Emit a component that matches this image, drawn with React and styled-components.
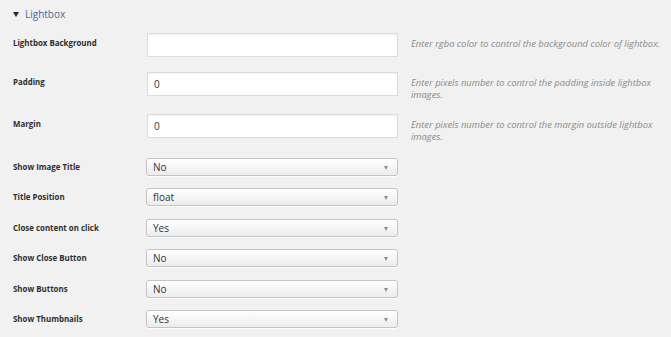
import React from "react";
import styled, { createGlobalStyle } from "styled-components";

const Global = createGlobalStyle`
  html, body { margin: 0; padding: 0; background: #f1f1f1; }
  body { font-family: "Open Sans", "Noto Sans", sans-serif; color: #333; }
`;

const Page = styled.div`
  width: 671px;
  height: 337px;
  background: #f1f1f1;
  padding: 7px 0 0 13px;
  box-sizing: border-box;
  overflow: hidden;
`;

const Header = styled.div`
  display: flex;
  align-items: center;
  gap: 6px;
  height: 14px;
  font-size: 10px;
  color: #4f63a2;
`;

const Caret = styled.span`
  width: 0;
  height: 0;
  border-left: 3px solid transparent;
  border-right: 3px solid transparent;
  border-top: 5px solid #2a2a2a;
`;

const Row = styled.div`
  display: grid;
  grid-template-columns: 121px 251px 1fr;
  column-gap: 13px;
  align-items: start;
  margin-top: ${(p) => p.$top}px;
`;

const Label = styled.div`
  font-size: 7.9px;
  font-weight: 700;
  color: #2f2f2f;
  line-height: 12px;
  padding-top: ${(p) => p.$pad}px;
  white-space: nowrap;
`;

const TextInput = styled.div`
  height: 24px;
  box-sizing: border-box;
  background: #fff;
  border: 1px solid #dcdcdc;
  box-shadow: inset 0 1px 2px rgba(0, 0, 0, 0.06);
  font-size: 10px;
  line-height: 22px;
  padding-left: 6px;
  color: #333;
`;

const Description = styled.div`
  font-size: 9.4px;
  font-style: italic;
  color: #8a8a8a;
  line-height: 11.5px;
  padding-top: 5px;
`;

const Select = styled.div`
  position: relative;
  height: 18px;
  margin-left: -1px;
  box-sizing: border-box;
  border: 1px solid #c4c4c4;
  border-radius: 3px;
  background: linear-gradient(#ffffff, #ececec);
  box-shadow: 0 1px 0 rgba(255, 255, 255, 0.8);
  font-size: 10px;
  line-height: 16px;
  padding-left: 6px;
  color: #333;
`;

const Arrow = styled.span`
  position: absolute;
  right: 9px;
  top: 7px;
  width: 0;
  height: 0;
  border-left: 2.5px solid transparent;
  border-right: 2.5px solid transparent;
  border-top: 4px solid #8e8e8e;
`;

const textRows = [
  { label: "Lightbox Background", value: "", desc: "Enter rgba color to control the background color of lightbox.", top: 12 },
  { label: "Padding", value: "0", desc: "Enter pixels number to control the padding inside lightbox images.", top: 15 },
  { label: "Margin", value: "0", desc: "Enter pixels number to control the margin outside lightbox images.", top: 14 },
];

const selectRows = [
  ["Show Image Title", "No"],
  ["Title Position", "float"],
  ["Close content on click", "Yes"],
  ["Show Close Button", "No"],
  ["Show Buttons", "No"],
  ["Show Thumbnails", "Yes"],
];

export default function App() {
  return (
    <Page>
      <Global />
      <Header>
        <Caret />
        <span>Lightbox</span>
      </Header>
      {textRows.map((r) => (
        <Row key={r.label} $top={r.top}>
          <Label $pad={4}>{r.label}</Label>
          <TextInput>{r.value}</TextInput>
          <Description>{r.desc}</Description>
        </Row>
      ))}
      {selectRows.map(([label, value], i) => (
        <Row key={label} $top={i === 0 ? 16 : 12.4}>
          <Label $pad={3}>{label}</Label>
          <Select>
            {value}
            <Arrow />
          </Select>
          <div />
        </Row>
      ))}
    </Page>
  );
}
